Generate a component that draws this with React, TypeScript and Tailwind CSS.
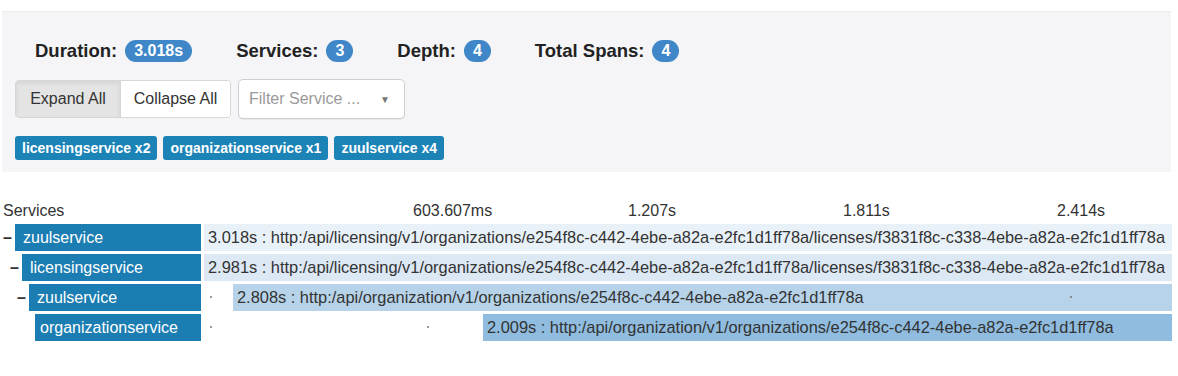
import { ReactNode } from "react";

const font = { fontFamily: '"Liberation Sans", Arial, Helvetica, sans-serif' };

function Badge({ children }: { children: ReactNode }) {
  return (
    <span className="inline-flex h-[22px] items-center rounded-full bg-[#3f87c8] px-[9px] text-[16px] font-bold leading-none text-white">
      {children}
    </span>
  );
}

function Stat({ label, value }: { label: string; value: string }) {
  return (
    <div className="flex items-center gap-[8px]">
      <span className="text-[18.5px] font-bold text-[#222]">{label}</span>
      <Badge>{value}</Badge>
    </div>
  );
}

interface SpanRow {
  service: string;
  depth: number;
  collapsible: boolean;
  offset: number;
  bar: string;
  text: string;
  dots: number[];
}

const licPath =
  "http:/api/licensing/v1/organizations/e254f8c-c442-4ebe-a82a-e2fc1d1ff78a/licenses/f3831f8c-c338-4ebe-a82a-e2fc1d1ff78a";
const orgPath = "http:/api/organization/v1/organizations/e254f8c-c442-4ebe-a82a-e2fc1d1ff78a";

const rows: SpanRow[] = [
  { service: "zuulservice", depth: 0, collapsible: true, offset: 0, bar: "bg-[#e9f1f8]", text: `3.018s : ${licPath}`, dots: [] },
  { service: "licensingservice", depth: 1, collapsible: true, offset: 0, bar: "bg-[#dce8f4]", text: `2.981s : ${licPath}`, dots: [] },
  { service: "zuulservice", depth: 2, collapsible: true, offset: 29, bar: "bg-[#b7d3ea]", text: `2.808s : ${orgPath}`, dots: [6, 866] },
  { service: "organizationservice", depth: 3, collapsible: false, offset: 279, bar: "bg-[#8fbcdf]", text: `2.009s : ${orgPath}`, dots: [6, 223] },
];

const padLeft = ["pl-[3px]", "pl-[10px]", "pl-[17px]", "pl-[23px]"];
const labelPad = ["pl-[8px]", "pl-[8px]", "pl-[8px]", "pl-[5px]"];

function Row({ row }: { row: SpanRow }) {
  return (
    <div className="flex h-[27px] items-stretch">
      <div className={`flex w-[201px] shrink-0 items-stretch ${padLeft[row.depth]}`}>
        <span className="flex w-[12px] items-center text-[16px] font-bold text-[#333]">
          {row.collapsible ? "–" : ""}
        </span>
        <div className={`flex flex-1 items-center bg-[#1b7db2] text-[16px] text-white ${labelPad[row.depth]}`}>
          {row.service}
        </div>
      </div>
      <div className="relative ml-[3px] mr-[6px] flex flex-1">
        {row.dots.map((d) => (
          <span key={d} className="absolute top-[12px] h-[2px] w-[2px] rounded-full bg-[#777]" style={{ left: d }} />
        ))}
        <div
          className={`flex flex-1 items-center overflow-hidden whitespace-nowrap pl-[4px] text-[16.4px] text-[#333] ${row.bar}`}
          style={{ marginLeft: row.offset }}
        >
          {row.text}
        </div>
      </div>
    </div>
  );
}

export default function App() {
  return (
    <div className="h-[376px] w-[1178px] overflow-hidden bg-white" style={font}>
      <div className="ml-[2px] mr-[7px] mt-[11px] border-t border-[#ececee] bg-[#f5f5f7] px-[13px] pb-[12px] pt-[28px]">
        <div className="flex h-[22px] items-center gap-[44px] pl-[20px]">
          <Stat label="Duration:" value="3.018s" />
          <Stat label="Services:" value="3" />
          <Stat label="Depth:" value="4" />
          <Stat label="Total Spans:" value="4" />
        </div>

        <div className="mt-[17px] flex items-center gap-[7px]">
          <div className="flex h-[38px] overflow-hidden rounded-[4px] border border-[#d6d6d6] text-[16px] text-[#333]">
            <button type="button" className="w-[104px] bg-[#e4e4e4] shadow-[inset_0_2px_4px_rgba(0,0,0,0.08)]">
              Expand All
            </button>
            <button type="button" className="w-[110px] border-l border-[#d6d6d6] bg-white">
              Collapse All
            </button>
          </div>
          <div className="flex h-[40px] w-[167px] items-center justify-between rounded-[5px] border border-[#cfcfcf] bg-white pl-[10px] pr-[14px] text-[16px] text-[#9a9a9a] shadow-[0_1px_1px_rgba(0,0,0,0.06)]">
            <span>Filter Service ...</span>
            <span className="text-[10px] text-[#777]">▼</span>
          </div>
        </div>

        <div className="mt-[17px] flex gap-[6px]">
          {["licensingservice x2", "organizationservice x1", "zuulservice x4"].map((t) => (
            <span
              key={t}
              className="flex h-[24px] items-center rounded-[3px] bg-[#1c83b7] px-[7px] text-[14px] font-bold text-white"
            >
              {t}
            </span>
          ))}
        </div>
      </div>

      <div className="mt-[30px] flex h-[18px] items-center text-[16px] leading-[18px] text-[#333]">
        <span className="w-[413px] shrink-0 pl-[3px]">Services</span>
        <span className="w-[215px] shrink-0">603.607ms</span>
        <span className="w-[215px] shrink-0">1.207s</span>
        <span className="w-[214px] shrink-0">1.811s</span>
        <span className="shrink-0">2.414s</span>
      </div>

      <div className="mt-[4px] flex flex-col gap-[3px]">
        {rows.map((r, i) => (
          <Row key={i} row={r} />
        ))}
      </div>
    </div>
  );
}
